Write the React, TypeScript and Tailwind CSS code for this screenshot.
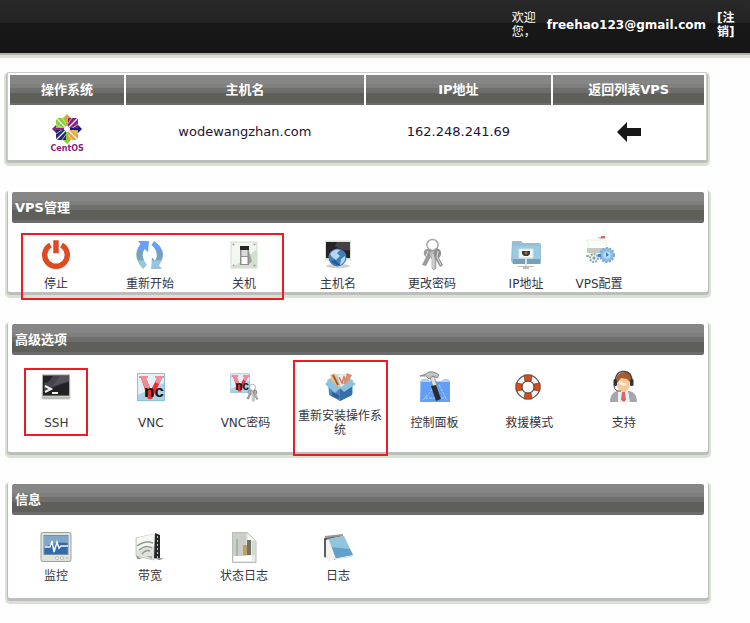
import type { ReactNode } from "react";

const FONT = "font-['DejaVu_Sans','Noto_Sans_CJK_SC',sans-serif]";
const BAR =
  "bg-[linear-gradient(#868686_9px,#7e7f7a_9px,#7e7f7a_13px,#6f6f70_13px,#6f6f70_18px,#5e5f59_18px,#5e5f59_28px,#6b6b6c_28px)]";
const CARD =
  "relative rounded-[2px] bg-white shadow-[0_2px_0_1px_#bdbdbd,0_3px_0_3px_#d6e3d0]";

function Icon({ children }: { children: ReactNode }) {
  return (
    <svg viewBox="0 0 32 32" className="h-8 w-8 shrink-0 overflow-visible" aria-hidden="true">
      {children}
    </svg>
  );
}

const PowerIcon = () => (
  <Icon>
    <path d="M10.500 6.200A11.300 11.300 0 1 0 21.500 6.200" fill="none" stroke="#df4a22" strokeWidth="5.500" />
    <rect x="13" y="1" width="6" height="13.500" fill="#e0482a" stroke="#fff" strokeWidth="0.500" />
  </Icon>
);

const RestartIcon = () => (
  <Icon>
    <defs>
      <linearGradient id="arrowBlue" x1="0" y1="0" x2="0" y2="30" gradientUnits="userSpaceOnUse">
        <stop offset="0.36" stopColor="#699ff8" />
        <stop offset="0.42" stopColor="#759fba" />
        <stop offset="0.68" stopColor="#7ba5bd" />
        <stop offset="0.74" stopColor="#98c5dc" />
      </linearGradient>
    </defs>
    <g fill="url(#arrowBlue)">
      <path d="M4 2H15L14 13L10.500 10Q6 17 13 26L9 30Q-3 17 6.500 5Z" />
      <path d="M20 2L17.500 6Q26 14 21 21.500L18 18.500L17 30H28L25 26.500Q35 12 20 2Z" />
    </g>
  </Icon>
);

const SwitchIcon = () => (
  <Icon>
    <rect x="3" y="3" width="26" height="26" fill="#f4f6f2" stroke="#d1dccc" />
    <path d="M29 10V29H4Z" fill="#d3dfcf" />
    <path d="M20 9L24 22L20 26Z" fill="#a0a29f" />
    <rect x="12" y="7" width="9" height="19" fill="#8e8e8e" />
    <rect x="12" y="7" width="9" height="4" fill="#252525" />
    <rect x="13.500" y="11" width="6" height="6" fill="#dadbd9" />
    <path d="M13.500 18H19.500V25H13.500Z" fill="#fff" />
    <g fill="#949b94">
      <circle cx="5.500" cy="5.500" r="1" /><circle cx="26.500" cy="5.500" r="1" />
      <circle cx="5.500" cy="26.500" r="1" /><circle cx="26.500" cy="26.500" r="1" />
    </g>
  </Icon>
);

const HostIcon = () => (
  <Icon>
    <rect x="3" y="1.500" width="26" height="20" fill="#d9e4d5" />
    <rect x="4" y="3" width="24" height="16" fill="#252326" />
    <path d="M15 3H28V11Q20 12 13 7Z" fill="#454044" />
    <ellipse cx="16" cy="27" rx="12" ry="2" fill="#cbd2cb" />
    <circle cx="15.500" cy="18.500" r="9" fill="#427eb6" />
    <path d="M8 15Q12 9 18 11L15 14L18 17L14 21L10 18ZM19 20L23 17Q24 23 18 26Z" fill="#b4d6f1" />
    <path d="M9 22Q13 27 18 26L13 21Z" fill="#205b9a" />
  </Icon>
);

function Keys() {
  return (
    <>
      <circle cx="16.500" cy="6" r="5.500" fill="none" stroke="#9a9a9a" strokeWidth="1.500" />
      <circle cx="16.500" cy="6" r="5" fill="none" stroke="#dedede" strokeWidth="0.600" />
      <path d="M11 10Q7 11 8 16L10 18L6 26L10 27L15 17L17 13L14 10Z" fill="#9a9a9a" />
      <path d="M14 12Q12 17 16 20V29L18 31L20 29V20Q23 16 20 12Z" fill="#bdbdbd" stroke="#888" strokeWidth="0.600" />
      <path d="M20 9Q26 10 25 16L23 19L27 26L24 28L19 19L17 15Z" fill="#8f8f8f" />
      <path d="M12 12L10 17M17 15V29M22 12L21 18L25 26" fill="none" stroke="#e2e2e2" />
    </>
  );
}

const KeysIcon = () => <Icon><Keys /></Icon>;

const NetFolderIcon = () => (
  <Icon>
    <path d="M2 3Q2 2 3 2H11L13 4H29Q31 4 31 6V24Q31 25 30 25H3L1 22Z" fill="#94bfd6" />
    <path d="M3 7H30V20H3Z" fill="#9acbe3" />
    <path d="M3 20H30V25H3Z" fill="#769fbc" />
    <rect x="9" y="10" width="14" height="9" fill="#f7faf6" stroke="#d4e4dc" />
    <path d="M12 12H20V15L18 17H14L12 15Z" fill="#3d3a39" />
    <circle cx="16" cy="14" r="1.500" fill="#a06c45" />
    <path d="M15 19H17V27H15Z" fill="#d7e3de" />
    <path d="M8 27H24V28H19V30H13V28H8Z" fill="#b6bfb7" />
  </Icon>
);

const ConfigIcon = () => (
  <Icon>
    <path d="M3 1H23V16H5V4Z" fill="#fcfdfb" stroke="#dde6d9" strokeWidth="0.700" />
    <path d="M4 9H22L20 14H4Z" fill="#c6c9c5" />
    <path d="M14 -2H22V0H17Z" fill="#c8c8c8" />
    <path d="M18 -3H22V-1H18Z" fill="#dc6553" />
    <circle cx="24" cy="16" r="7" fill="#8ebce8" stroke="#73a9df" strokeWidth="2" strokeDasharray="2 1.500" />
    <circle cx="24" cy="16" r="3.500" fill="#c4dff5" />
    <path d="M23 13L26 16L23 18Z" fill="#367bc4" />
    <circle cx="11" cy="19" r="4" fill="#e8f0f0" stroke="#9aa9ae" strokeWidth="2" strokeDasharray="2 1" />
    <circle cx="11" cy="19" r="1.500" fill="#7b9fad" />
    <path d="M3 16H6V18H3Z" fill="#a3b1b4" />
    <path d="M15 15H18V18H15Z" fill="#4a82bc" />
  </Icon>
);

const TerminalIcon = () => (
  <Icon>
    <path d="M2 3H30L31 27L29 29H3L1 27Z" fill="#e3eae0" />
    <path d="M2 26H30V28H2Z" fill="#b9bbb9" />
    <rect x="2.500" y="4" width="27" height="21" fill="#242126" stroke="#aab0aa" />
    <path d="M13 5H29V11Q20 13 4 20V12Q9 12 13 5Z" fill="#47424b" />
    <path d="M20 5H29V10Q19 12 12 16Z" fill="#726d72" opacity="0.400" />
    <path d="M5 15L11 18L5 21M12 22H18" fill="none" stroke="#f1f1ef" strokeWidth="2" />
  </Icon>
);

function VncMark() {
  return (
    <>
      <rect x="2.500" y="2.500" width="27" height="27" fill="#e2f1f8" stroke="#8cbfdc" />
      <path d="M3 24L29 12V29H3Z" fill="#8cc0dc" opacity="0.650" />
      <path d="M4 5H13V7H11L16 19L22 7H20V5H29V7H27L17 28H13L6 7H4Z" fill="#ea3039" />
      <path d="M4 5H13V7H11L15 17L11 20L6 7H4ZM20 5H29V7H27L24 13L20 11L22 7H20Z" fill="#f08e98" />
      <text x="9" y="26" className="font-['Liberation_Sans'] text-[17px] font-bold" fill="#151113">nc</text>
    </>
  );
}

const VncIcon = () => <Icon><VncMark /></Icon>;

const VncKeysIcon = () => (
  <Icon>
    <g transform="translate(0 1) scale(.7)"><VncMark /></g>
    <g transform="translate(14 13) scale(.57)"><Keys /></g>
  </Icon>
);

const BoxIcon = () => (
  <Icon>
    <path d="M3 9L14 3L29 9V23L16 29L5 23Z" fill="#9cc6de" />
    <path d="M6 4L11 2L16 16L11 17Z" fill="#efc080" />
    <path d="M9 4L14 14" stroke="#a45b31" strokeWidth="2" />
    <path d="M13 4L24 3L25 13L17 17Z" fill="#f2f2ef" stroke="#c9cec8" strokeWidth="0.600" />
    <path d="M15 6L18 12L20 6L22 12" fill="none" stroke="#df705f" strokeWidth="1.500" />
    <path d="M23 2L28 4L23 14L19 13Z" fill="#cf9572" />
    <path d="M5 14L16 18L28 13V24L16 30L5 24Z" fill="#4c87b7" />
    <path d="M16 18L28 13V24L16 30Z" fill="#3470aa" />
    <path d="M1 13L6 9L16 17L11 22ZM16 17L26 9L32 13L20 21Z" fill="#8dc1dd" />
    <path d="M8 21L15 24V28L8 25Z" fill="#2e5f9d" />
  </Icon>
);

const ToolsIcon = () => (
  <Icon>
    <path d="M1 10L3 8H9L11 10H22L25 8H29L31 10V31H1Z" fill="#b0cff5" />
    <path d="M2 11H31V31H1Z" fill="#659ef5" />
    <path d="M4 29L12 20L17 12M20 14L28 29M6 27H27" fill="none" stroke="#a9cef4" strokeDasharray="3 1" />
    <path d="M11 6L15 5L18 15L14 16Z" fill="#dedfdd" stroke="#707470" strokeWidth="0.600" />
    <path d="M1 5L7 3Q10 -1 17 2L20 4L18 7L14 5L10 8L7 5Z" fill="#c1c4c0" stroke="#676d68" strokeWidth="0.700" />
    <path d="M12 15L17 14L22 28L17 30Z" fill="#2b2c2d" />
  </Icon>
);

const LifebuoyIcon = () => (
  <Icon>
    <circle cx="15" cy="16" r="9" fill="none" stroke="#595652" strokeWidth="7" />
    <circle cx="15" cy="16" r="9" fill="none" stroke="#f3f3ef" strokeWidth="4.500" />
    <path d="M11 4H19L18 10H12ZM11 28H19L18 22H12ZM3 12V20L9 19V13ZM27 12V20L21 19V13Z" fill="#d64a20" stroke="#72452f" strokeWidth="0.800" />
  </Icon>
);

const SupportIcon = () => (
  <Icon>
    <path d="M2 31Q2 22 9 20H22Q29 22 29 31Z" fill="#a6a7aa" />
    <path d="M10 20H20L22 31H10Z" fill="#eef0f2" />
    <path d="M14 21H17L18 29L16 31L13 29Z" fill="#e06569" />
    <ellipse cx="15.500" cy="13" rx="6.500" ry="8" fill="#f6c89a" />
    <path d="M8 11Q7 2 17 1Q25 2 23 12L19 8L13 7L9 12Z" fill="#a95b2c" />
    <path d="M7 10Q8 0 16 .5Q24 1 24 10" fill="none" stroke="#444" strokeWidth="1.300" />
    <rect x="5.500" y="8" width="3.500" height="7" rx="1.500" fill="#333" />
    <rect x="22" y="8" width="3.500" height="7" rx="1.500" fill="#333" />
    <path d="M6 14Q6 21 13 20" fill="none" stroke="#555" />
    <path d="M11 10L19 13L16 15L11 13Z" fill="#fff0df" />
  </Icon>
);

const MonitorIcon = () => (
  <Icon>
    <rect x="1" y="1.500" width="30" height="29" rx="2" fill="#dfe3dd" stroke="#9ba29b" />
    <rect x="4" y="4.500" width="24" height="19" fill="#326ba9" stroke="#7591aa" />
    <path d="M4 5H28V12Q14 10 4 17Z" fill="#7fa7c9" />
    <path d="M5 16H10L12 10L14 21L17 11L19 17L21 15H28" fill="none" stroke="#f4f9f5" strokeWidth="1.500" />
    <circle cx="17" cy="27" r="1.500" fill="#fff" stroke="#a2a6a2" strokeWidth="0.700" />
    <circle cx="22" cy="27" r="1.500" fill="#fff" stroke="#a2a6a2" strokeWidth="0.700" />
    <circle cx="27" cy="27" r="1.300" fill="#c8ccc8" />
  </Icon>
);

const RouterIcon = () => (
  <Icon>
    <path d="M2 7L20 3V29L2 25Z" fill="#dce1da" stroke="#c7cec5" />
    <path d="M3 7L20 3V15L3 19Z" fill="#f5f7f3" />
    <path d="M21 2L26 4V29L20 27Z" fill="#252726" />
    <path d="M23.500 5V27" stroke="#bdd66b" strokeDasharray="2 2" />
    <path d="M3 15Q11 9 19 12M5 19Q12 13 18 17M8 23Q12 18 16 20" fill="none" stroke="#949994" strokeWidth="1.500" />
    <path d="M2 24L8 28H3ZM20 27H30L26 29Z" fill="#9ba19c" />
    <path d="M12 25H18V28Z" fill="#aeb0ae" />
  </Icon>
);

const StatusLogIcon = () => (
  <Icon>
    <path d="M4.500 1.500H19L28 10V31.500H4.500Z" fill="#e6e9e4" stroke="#b5beb2" />
    <path d="M5 2H18V25H5Z" fill="#cbcdca" />
    <path d="M19 2V10H28Z" fill="#f7faf5" stroke="#bcc6b9" strokeWidth="0.600" />
    <path d="M8 8H10V25H8Z" fill="#aeb1ad" />
    <path d="M15 14H19V24H15Z" fill="#c3a057" />
    <path d="M19 9H23V24H19Z" fill="#716e6c" />
    <path d="M24 11H28V24H24Z" fill="#cedbc9" />
    <rect x="6" y="25" width="18" height="5" fill="#fff" />
  </Icon>
);

const NotebookIcon = () => (
  <Icon>
    <path d="M2 7L18 4L22 7L13 29L2 26Z" fill="#5d5b5d" />
    <path d="M4 9L20 5L12 29L4 25Z" fill="#e2e9df" />
    <path d="M5 8L22 5L31 24L10 28Z" fill="#90c4df" />
    <path d="M8 16L28 18L31 24L10 28Z" fill="#60a0c9" />
    <path d="M4 9L7 9L14 28L6 30L4 26Z" fill="#eff3eb" />
    <path d="M3 6L21 4" stroke="#989795" strokeWidth="2" />
    <path d="M14 28L31 25" fill="none" stroke="#cee3ed" />
  </Icon>
);

const CentosLogo = () => (
  <svg viewBox="0 0 30 30" className="h-[30px] w-[30px]" aria-hidden="true">
    <path d="M15 0L19 4H11Z" fill="#e7a33d" />
    <path d="M30 15L26 19V11Z" fill="#18168b" />
    <path d="M15 30L11 26H19Z" fill="#81d331" />
    <path d="M0 15L4 11V19Z" fill="#8d2179" />
    <rect x="4" y="4" width="10" height="10" fill="#82d52d" />
    <rect x="16" y="4" width="10" height="10" fill="#8c2079" />
    <rect x="4" y="16" width="10" height="10" fill="#25267f" />
    <rect x="16" y="16" width="10" height="10" fill="#e9a43c" />
    <path d="M4 4L26 26M26 4L4 26" stroke="#fff" strokeWidth="1.200" />
    <path d="M10 4L15 11L20 4M10 26L15 19L20 26M4 10L11 15L4 20M26 10L19 15L26 20" fill="none" stroke="#f0e6ee" strokeWidth="0.700" />
    <path d="M15 3V12" stroke="#e7a33d" strokeWidth="2" />
    <path d="M18 15H27" stroke="#18168b" strokeWidth="2" />
    <path d="M15 18V27" stroke="#81d331" strokeWidth="2" />
    <path d="M3 15H12" stroke="#8d2179" strokeWidth="2" />
    <circle cx="15" cy="15" r="2.500" fill="#fff" />
  </svg>
);

type Entry = { label: string; icon: () => ReactNode };

const manage: Entry[] = [
  { label: "停止", icon: PowerIcon },
  { label: "重新开始", icon: RestartIcon },
  { label: "关机", icon: SwitchIcon },
  { label: "主机名", icon: HostIcon },
  { label: "更改密码", icon: KeysIcon },
  { label: "IP地址", icon: NetFolderIcon },
  { label: "VPS配置", icon: ConfigIcon },
];
const advanced: Entry[] = [
  { label: "SSH", icon: TerminalIcon },
  { label: "VNC", icon: VncIcon },
  { label: "VNC密码", icon: VncKeysIcon },
  { label: "重新安装操作系统", icon: BoxIcon },
  { label: "控制面板", icon: ToolsIcon },
  { label: "救援模式", icon: LifebuoyIcon },
  { label: "支持", icon: SupportIcon },
];
const info: Entry[] = [
  { label: "监控", icon: MonitorIcon },
  { label: "带宽", icon: RouterIcon },
  { label: "状态日志", icon: StatusLogIcon },
  { label: "日志", icon: NotebookIcon },
];

function Panel({
  title,
  entries,
  columns,
  body,
  labelBox,
  children,
}: {
  title: string;
  entries: Entry[];
  columns: string;
  body: string;
  labelBox: string;
  children?: ReactNode;
}) {
  return (
    <section className={`${CARD} px-1 pt-[2px]`}>
      <h2 className={`${BAR} flex h-[31px] items-center rounded-[2px] pl-[3px] text-[13px] font-bold text-white`}>
        {title}
      </h2>
      <div className={`grid ${columns} ${body}`}>
        {entries.map(({ label, icon: Glyph }) => (
          <button key={label} type="button" className="flex flex-col items-center text-xs leading-[14px] text-[#37343c]">
            <Glyph />
            <span className={`flex items-center justify-center ${labelBox}`}>{label}</span>
          </button>
        ))}
      </div>
      {children}
    </section>
  );
}

const TH = `${BAR} h-[30px] p-0 text-[13px] font-bold text-white`;
const MARK = "pointer-events-none absolute border-2 border-[#ed1c24]";

export default function App() {
  return (
    <div className={`${FONT} min-h-screen bg-[#fefefe] pb-5`}>
      <header className="flex h-[58px] items-center justify-end gap-[11px] border-b-[3px] border-[#d8e4d2] bg-[linear-gradient(#282828_0,#242424_23px,#181818_23px,#161616_53px,#b2afb2_53px)] pr-[13px] pb-[5px] text-xs leading-[14px] text-white">
        <span className="w-6">欢迎您，</span>
        <strong>freehao123@gmail.com</strong>
        <a href="#logout" className="w-5 font-bold">[注销]</a>
      </header>

      <main className="mr-[42px] ml-2 flex flex-col gap-[30px] pt-[14px]">
        <section className={`${CARD} mr-px -ml-px border border-[#cbcbcb] border-b-white`}>
          <table className="w-full table-fixed border-separate border-spacing-[2px] text-center text-[13px]">
            <thead>
              <tr>
                <th className={`${TH} w-[16.6%]`}>操作系统</th>
                <th className={`${TH} w-[34.5%]`}>主机名</th>
                <th className={`${TH} w-[27%]`}>IP地址</th>
                <th className={TH}>返回列表VPS</th>
              </tr>
            </thead>
            <tbody className="text-[#1e1433]">
              <tr>
                <td className="h-[50px] p-0">
                  <div className="flex flex-col items-center pt-1">
                    <CentosLogo />
                    <span className="text-[8px] leading-[10px] font-bold text-[#8a1f74]">CentOS</span>
                  </div>
                </td>
                <td className="p-0">wodewangzhan.com</td>
                <td className="p-0">162.248.241.69</td>
                <td className="p-0">
                  <a href="#list" aria-label="返回列表VPS" className="flex justify-center">
                    <svg viewBox="0 0 24 20" className="h-5 w-6" aria-hidden="true">
                      <path d="M0 10L10 0V6H24V14H10V20Z" fill="#171717" />
                    </svg>
                  </a>
                </td>
              </tr>
            </tbody>
          </table>
        </section>

        <Panel
          title="VPS管理"
          entries={manage}
          columns="-mx-[3px] grid-cols-[repeat(6,94px)_52px]"
          body="pt-4 pb-px"
          labelBox="mt-[6px] h-[14px]"
        >
          <div className={`${MARK} top-[43px] left-[13px] z-10 h-[67px] w-[263px]`} />
        </Panel>

        <Panel
          title="高级选项"
          entries={advanced}
          columns="-ml-[3px] mr-[33px] grid-cols-7"
          body="pt-4 pb-[15px]"
          labelBox="mt-[6px] h-7 max-w-[88px]"
        >
          <div className={`${MARK} top-[46px] left-4 h-[68px] w-16`} />
          <div className={`${MARK} top-[38px] left-[285px] h-24 w-[95px]`} />
        </Panel>

        <Panel
          title="信息"
          entries={info}
          columns="-ml-[3px] mr-[33px] grid-cols-[repeat(4,94px)]"
          body="pt-4 pb-[15px]"
          labelBox="mt-[6px] h-[14px]"
        />
      </main>
    </div>
  );
}
